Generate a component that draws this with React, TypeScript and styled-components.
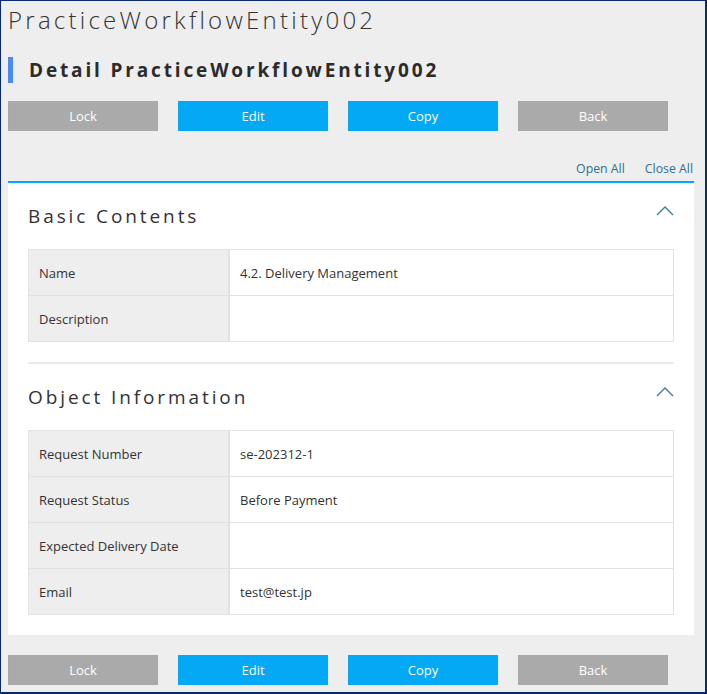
import React from "react";
import styled, { createGlobalStyle } from "styled-components";

const Global = createGlobalStyle`
  html, body { margin: 0; padding: 0; background: #eeeeee; }
  body { font-family: "Open Sans", "Noto Sans", sans-serif; color: #333; }
`;

const Frame = styled.div`
  box-sizing: border-box;
  width: 707px;
  height: 694px;
  border: 1px solid #0b2a6b;
  border-right-width: 2px;
  border-bottom-width: 2px;
  background: #eeeeee;
  padding: 0 11px 0 7px;
  overflow: hidden;
`;

const Title = styled.h1`
  margin: 0;
  padding-top: 2px;
  font-size: 24px;
  font-weight: 300;
  letter-spacing: 3.25px;
  line-height: 33px;
  color: #333;
  white-space: nowrap;
`;

const Heading = styled.h2`
  margin: 21px 0 0 0;
  height: 26px;
  display: flex;
  align-items: center;
  border-left: 5px solid #4a8af4;
  padding-left: 16px;
  font-size: 19px;
  font-weight: 700;
  letter-spacing: 2.85px;
  color: #2b2b2b;
  white-space: nowrap;
`;

const ButtonRow = styled.div<{ $top: number }>`
  display: flex;
  gap: 20px;
  margin-top: ${(p) => p.$top}px;
`;

const Btn = styled.button<{ $primary?: boolean }>`
  width: 150px;
  height: 30px;
  border: 1px solid ${(p) => (p.$primary ? "#05a9f2" : "#a8a8a8")};
  background: ${(p) => (p.$primary ? "#03a9f4" : "#aaaaaa")};
  color: #fff;
  font-family: "Open Sans", "Noto Sans", sans-serif;
  font-size: 13px;
  padding: 0;
  cursor: pointer;
`;

const LinkBar = styled.div`
  display: flex;
  justify-content: flex-end;
  gap: 20px;
  margin-top: 26px;
  height: 22px;
  align-items: center;
  padding-right: 1px;
`;

const TopLink = styled.a`
  font-size: 12.3px;
  color: #2f6f95;
  text-decoration: none;
`;

const Panel = styled.div`
  margin-top: 2px;
  background: #fff;
  border-top: 2px solid #03a9f4;
  padding: 0 20px 20px 20px;
`;

const Section = styled.section<{ $divider?: boolean }>`
  border-top: ${(p) => (p.$divider ? "2px solid #ebebeb" : "none")};
  margin-top: ${(p) => (p.$divider ? "20px" : "0")};
`;

const SectionHead = styled.div`
  display: flex;
  align-items: center;
  justify-content: space-between;
  height: 66px;
`;

const SectionTitle = styled.h3`
  margin: 0;
  font-size: 19px;
  font-weight: 400;
  letter-spacing: 2.9px;
  color: #333;
`;

const Chevron = styled.svg`
  width: 18px;
  height: 10px;
  margin-right: 0;
  margin-top: -10px;
`;

const Table = styled.div`
  border: 1px solid #e2e2e2;
`;

const Row = styled.div`
  box-sizing: border-box;
  display: grid;
  grid-template-columns: 201px 1fr;
  height: 45px;
  & + & {
    height: 46px;
    border-top: 1px solid #e2e2e2;
  }
`;

const Label = styled.div`
  background: #eeeeee;
  border-right: 2px solid #e2e2e2;
  display: flex;
  align-items: center;
  padding-left: 10px;
  font-size: 13px;
  color: #333;
`;

const Value = styled.div`
  display: flex;
  align-items: center;
  padding-left: 10px;
  font-size: 13px;
  color: #333;
`;

const Up = () => (
  <Chevron viewBox="0 0 18 10">
    <polyline points="1,9 9,1 17,9" fill="none" stroke="#3f7aa0" strokeWidth="1.3" />
  </Chevron>
);

const Buttons = ({ top }: { top: number }) => (
  <ButtonRow $top={top}>
    <Btn>Lock</Btn>
    <Btn $primary>Edit</Btn>
    <Btn $primary>Copy</Btn>
    <Btn>Back</Btn>
  </ButtonRow>
);

const basic: [string, string][] = [
  ["Name", "4.2. Delivery Management"],
  ["Description", ""],
];

const obj: [string, string][] = [
  ["Request Number", "se-202312-1"],
  ["Request Status", "Before Payment"],
  ["Expected Delivery Date", ""],
  ["Email", "test@test.jp"],
];

export default function App() {
  return (
    <>
      <Global />
      <Frame>
        <Title>PracticeWorkflowEntity002</Title>
        <Heading>Detail PracticeWorkflowEntity002</Heading>
        <Buttons top={18} />
        <LinkBar>
          <TopLink>Open All</TopLink>
          <TopLink>Close All</TopLink>
        </LinkBar>
        <Panel>
          <Section>
            <SectionHead>
              <SectionTitle>Basic Contents</SectionTitle>
              <Up />
            </SectionHead>
            <Table>
              {basic.map(([l, v]) => (
                <Row key={l}>
                  <Label>{l}</Label>
                  <Value>{v}</Value>
                </Row>
              ))}
            </Table>
          </Section>
          <Section $divider>
            <SectionHead>
              <SectionTitle>Object Information</SectionTitle>
              <Up />
            </SectionHead>
            <Table>
              {obj.map(([l, v]) => (
                <Row key={l}>
                  <Label>{l}</Label>
                  <Value>{v}</Value>
                </Row>
              ))}
            </Table>
          </Section>
        </Panel>
        <Buttons top={20} />
      </Frame>
    </>
  );
}
